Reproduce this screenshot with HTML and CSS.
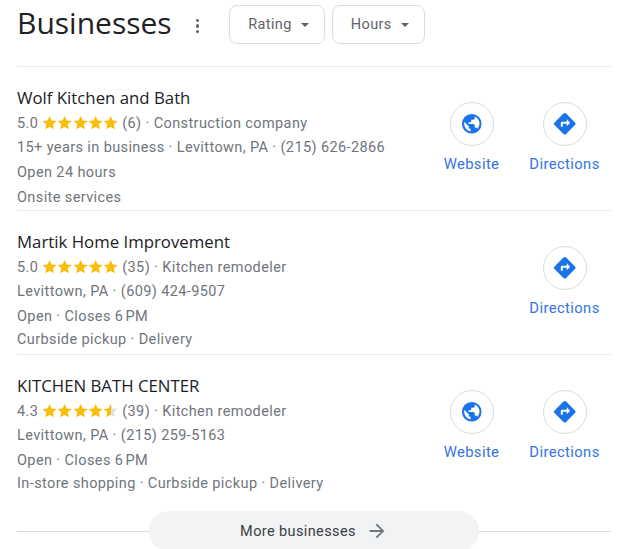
FILE: index.html
```html
<!DOCTYPE html>
<html lang="en">
<head>
    <meta charset="UTF-8">
    <title>Businesses</title>
    <link rel="stylesheet" href="styles.css">
</head>
<body>
    <svg class="defs" width="0" height="0">
        <defs>
            <linearGradient id="half">
                <stop offset="50%" stop-color="#fbbc04"/>
                <stop offset="50%" stop-color="#dfe1e5"/>
            </linearGradient>
            <symbol id="star" viewBox="0 0 24 24">
                <path d="M12 1.500l3.200 7.300 7.900.7-6 5.200 1.800 7.800L12 18.400l-6.900 4.100 1.800-7.800-6-5.200 7.900-.7z"/>
            </symbol>
            <symbol id="globe" viewBox="0 0 24 24">
                <path d="M12 2a10 10 0 1 0 0 20 10 10 0 0 0 0-20zM4.200 12c0-.7.100-1.300.3-1.900L9 14.500v1c0 1 .8 1.800 1.800 1.800v2.500A7.800 7.800 0 0 1 4.200 12zm13.600 5.100c-.2-.7-.9-1.300-1.700-1.300H15v-2.600c0-.5-.4-.9-.9-.9H8.800v-1.800h1.800c.5 0 .9-.4.900-.9V7.800h1.800c1 0 1.800-.8 1.800-1.800v-1.400a7.800 7.800 0 0 1 2.700 12.500z"/>
            </symbol>
            <symbol id="turn" viewBox="0 0 24 24">
                <path d="M22.400 10.600l-9-9a2 2 0 0 0-2.800 0l-9 9a2 2 0 0 0 0 2.800l9 9a2 2 0 0 0 2.800 0l9-9a2 2 0 0 0 0-2.800zM14 14.500V12h-4v3H8v-4c0-.6.400-1 1-1h5V7.500l3.500 3.500z"/>
            </symbol>
        </defs>
    </svg>

    <header class="top">
        <h1>Businesses</h1>
        <span class="dots"><i></i><i></i><i></i></span>
        <button class="filter">Rating <span class="caret"></span></button>
        <button class="filter">Hours <span class="caret"></span></button>
    </header>

    <section class="row">
        <div class="info">
            <div class="name">Wolf Kitchen and Bath</div>
            <div class="line">5.0
                <span class="stars">
                    <svg><use href="#star"/></svg><svg><use href="#star"/></svg><svg><use href="#star"/></svg><svg><use href="#star"/></svg><svg><use href="#star"/></svg>
                </span>
                (6) · Construction company</div>
            <div class="line">15+ years in business · Levittown, PA · (215) 626-2866</div>
            <div class="line">Open 24 hours</div>
            <div class="line line-low">Onsite services</div>
        </div>
        <a class="action">
            <span class="circle"><svg><use href="#globe"/></svg></span>
            Website
        </a>
        <a class="action">
            <span class="circle"><svg><use href="#turn"/></svg></span>
            Directions
        </a>
    </section>

    <section class="row">
        <div class="info">
            <div class="name">Martik Home Improvement</div>
            <div class="line">5.0
                <span class="stars">
                    <svg><use href="#star"/></svg><svg><use href="#star"/></svg><svg><use href="#star"/></svg><svg><use href="#star"/></svg><svg><use href="#star"/></svg>
                </span>
                (35) · Kitchen remodeler</div>
            <div class="line">Levittown, PA · (609) 424-9507</div>
            <div class="line">Open · Closes 6&#8239;PM</div>
            <div class="line line-high">Curbside pickup · Delivery</div>
        </div>
        <a class="action">
            <span class="circle"><svg><use href="#turn"/></svg></span>
            Directions
        </a>
    </section>

    <section class="row">
        <div class="info">
            <div class="name">KITCHEN BATH CENTER</div>
            <div class="line">4.3
                <span class="stars">
                    <svg><use href="#star"/></svg><svg><use href="#star"/></svg><svg><use href="#star"/></svg><svg><use href="#star"/></svg><svg class="half"><use href="#star"/></svg>
                </span>
                (39) · Kitchen remodeler</div>
            <div class="line">Levittown, PA · (215) 259-5163</div>
            <div class="line">Open · Closes 6&#8239;PM</div>
            <div class="line line-high">In-store shopping · Curbside pickup · Delivery</div>
        </div>
        <a class="action">
            <span class="circle"><svg><use href="#globe"/></svg></span>
            Website
        </a>
        <a class="action">
            <span class="circle"><svg><use href="#turn"/></svg></span>
            Directions
        </a>
    </section>

    <footer class="more">
        <button class="more-btn">More businesses
            <svg viewBox="0 0 24 24"><path d="M12 4l-1.400 1.400 5.600 5.600H4v2h12.200l-5.600 5.600L12 20l8-8z"/></svg>
        </button>
    </footer>
</body>
</html>
```

FILE: styles.css
```css
html, body {
    height: 549px;
    overflow: hidden;
}

body {
    margin: 0;
    padding: 0 10px 0 17px;
    font-family: Roboto, sans-serif;
    font-size: 14.5px;
    letter-spacing: 0.39px;
    color: #70757a;
    background: #fff;
}

.defs {
    position: absolute;
}

.top {
    display: flex;
    align-items: center;
    height: 67px;
    padding-bottom: 17px;
    box-sizing: border-box;
    border-bottom: 1px solid #e8eaed;
}

h1 {
    margin: 0 0 4px;
    font-family: "Open Sans", sans-serif;
    font-size: 30px;
    font-weight: 400;
    letter-spacing: 0;
    color: #202124;
}

.dots {
    display: flex;
    flex-direction: column;
    gap: 2px;
    margin: 3px 30px 0 24px;
}

.dots i {
    width: 3.500px;
    height: 3.500px;
    border-radius: 50%;
    background: #5f6368;
}

.filter {
    display: flex;
    align-items: center;
    justify-content: center;
    gap: 9px;
    height: 39px;
    margin-right: 7px;
    padding: 0 15px 0 18px;
    border: 1px solid #dadce0;
    border-radius: 8px;
    background: #fff;
    font: inherit;
    letter-spacing: 0.39px;
    color: #5f6368;
}

.caret {
    width: 0;
    height: 0;
    border: 4.500px solid transparent;
    border-top: 4.500px solid #5f6368;
    border-bottom: 0;
}

.row {
    display: flex;
    height: 144px;
    box-sizing: border-box;
    border-bottom: 1px solid #e8eaed;
}

.row:last-of-type {
    border-bottom: 0;
}

.info {
    flex: 1;
    padding-top: 19px;
}

.name {
    margin-bottom: 2px;
    font-family: "Open Sans", sans-serif;
    font-size: 16.800px;
    line-height: 24px;
    letter-spacing: 0;
    color: #202124;
}

.line {
    height: 24.400px;
    line-height: 24.400px;
    white-space: nowrap;
}

.line-low {
    margin-top: 1px;
}

.line-high {
    margin-top: -1px;
}

.stars {
    display: inline-flex;
    gap: 0;
    vertical-align: -2px;
}

.stars svg {
    width: 15.200px;
    height: 15.200px;
    fill: #fbbc04;
}

.stars .half {
    fill: url(#half);
}

.action {
    display: flex;
    flex-direction: column;
    align-items: center;
    gap: 8px;
    width: 93px;
    padding-top: 35px;
    font-size: 14.800px;
    line-height: 20px;
    color: #3574dc;
}

.circle {
    display: flex;
    align-items: center;
    justify-content: center;
    width: 44px;
    height: 44px;
    box-sizing: border-box;
    border: 1px solid #dadce0;
    border-radius: 50%;
}

.circle svg {
    width: 23.500px;
    height: 23.500px;
    fill: #1a73e8;
}

.more {
    display: flex;
    justify-content: center;
    margin-top: 12px;
    background: linear-gradient(#dadce0, #dadce0) center / 100% 1px no-repeat;
}

.more-btn {
    display: flex;
    align-items: center;
    justify-content: center;
    gap: 10px;
    width: 330px;
    height: 40px;
    border: 0;
    border-radius: 20px;
    background: #f1f3f4;
    font: inherit;
    letter-spacing: 0.39px;
    color: #3c4043;
}

.more-btn svg {
    width: 22px;
    height: 22px;
    fill: #70757a;
}
```
